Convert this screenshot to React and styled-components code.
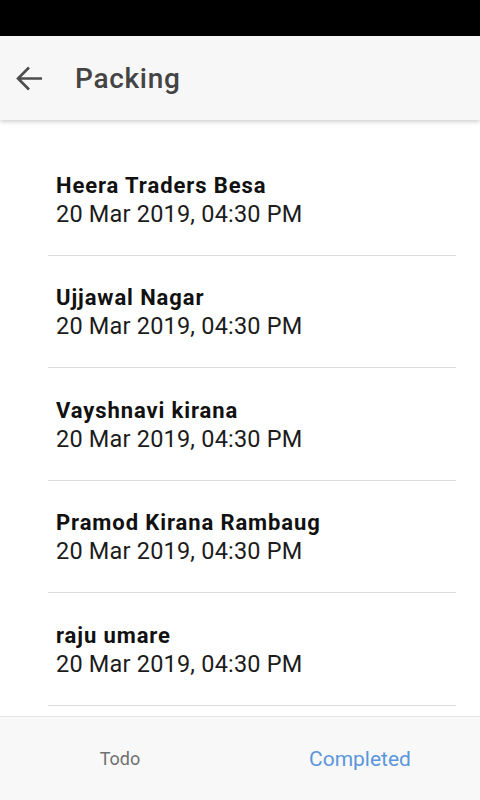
import React from 'react';
import styled, { createGlobalStyle } from 'styled-components';

const GlobalStyle = createGlobalStyle`
  html, body {
    margin: 0;
    padding: 0;
    background: #fff;
  }
  body {
    font-family: Roboto, 'Liberation Sans', Arial, sans-serif;
  }
`;

const orders = [
  { name: 'Heera Traders Besa', date: '20 Mar 2019, 04:30 PM' },
  { name: 'Ujjawal Nagar', date: '20 Mar 2019, 04:30 PM' },
  { name: 'Vayshnavi kirana', date: '20 Mar 2019, 04:30 PM' },
  { name: 'Pramod Kirana Rambaug', date: '20 Mar 2019, 04:30 PM' },
  { name: 'raju umare', date: '20 Mar 2019, 04:30 PM' },
];

const App = () => {
  return (
    <>
      <GlobalStyle />
      <SCREEN>
        <STATUSBAR />
        <HEADER>
          <BACK aria-label="back">
            <svg width="27" height="25" viewBox="0 0 27 25">
              <path d="M2 12.5H26M13 1.5L2 12.5L13 23.5" fill="none" stroke="#4d4d4d" strokeWidth="2.6" />
            </svg>
          </BACK>
          <TITLE>Packing</TITLE>
        </HEADER>
        <LIST>
          {orders.map((o, i) => (
            <ITEM key={i}>
              <NAME>{o.name}</NAME>
              <DATE>{o.date}</DATE>
            </ITEM>
          ))}
        </LIST>
        <FOOTER>
          <TAB>
            <TABLABEL>Todo</TABLABEL>
          </TAB>
          <TAB>
            <TABLABEL active>Completed</TABLABEL>
          </TAB>
        </FOOTER>
      </SCREEN>
    </>
  );
};

const SCREEN = styled.div`
  display: flex;
  flex-direction: column;
  width: 480px;
  height: 800px;
  overflow: hidden;
`;

const STATUSBAR = styled.div`
  height: 36px;
  flex-shrink: 0;
  background: #000;
`;

const HEADER = styled.div`
  position: relative;
  z-index: 1;
  display: flex;
  align-items: center;
  height: 84px;
  flex-shrink: 0;
  background: #f7f7f7;
  box-shadow: 0 2px 4px rgba(0, 0, 0, 0.18);
`;

const BACK = styled.div`
  display: flex;
  align-items: center;
  justify-content: center;
  width: 27px;
  height: 25px;
  margin-left: 16px;
  margin-top: 1px;
`;

const TITLE = styled.h1`
  margin: 0 0 0 32px;
  color: #444;
  font-size: 28px;
  font-weight: 500;
  letter-spacing: 0.7px;
`;

const LIST = styled.div`
  flex: 1;
  overflow: hidden;
  padding: 23px 24px 0 48px;
`;

const ITEM = styled.div`
  display: flex;
  flex-direction: column;
  padding: 28.5px 8px 27px;
  border-bottom: 1px solid #dcdcdc;
`;

const NAME = styled.div`
  color: #111;
  font-size: 22px;
  font-weight: 700;
  line-height: 28px;
  letter-spacing: 0.9px;
`;

const DATE = styled.div`
  color: #1c1c1c;
  font-size: 23.5px;
  font-weight: 400;
  line-height: 28px;
  letter-spacing: 0.2px;
`;

const FOOTER = styled.div`
  display: grid;
  grid-template-columns: 1fr 1fr;
  height: 83px;
  flex-shrink: 0;
  background: #f8f8f8;
  border-top: 1px solid #e6e6e6;
`;

const TAB = styled.div`
  display: flex;
  align-items: center;
  justify-content: center;
`;

const TABLABEL = styled.span`
  color: ${(p) => (p.active ? '#5b96dc' : '#707070')};
  font-size: ${(p) => (p.active ? '21px' : '18px')};
  line-height: 28px;
`;

export default App;
